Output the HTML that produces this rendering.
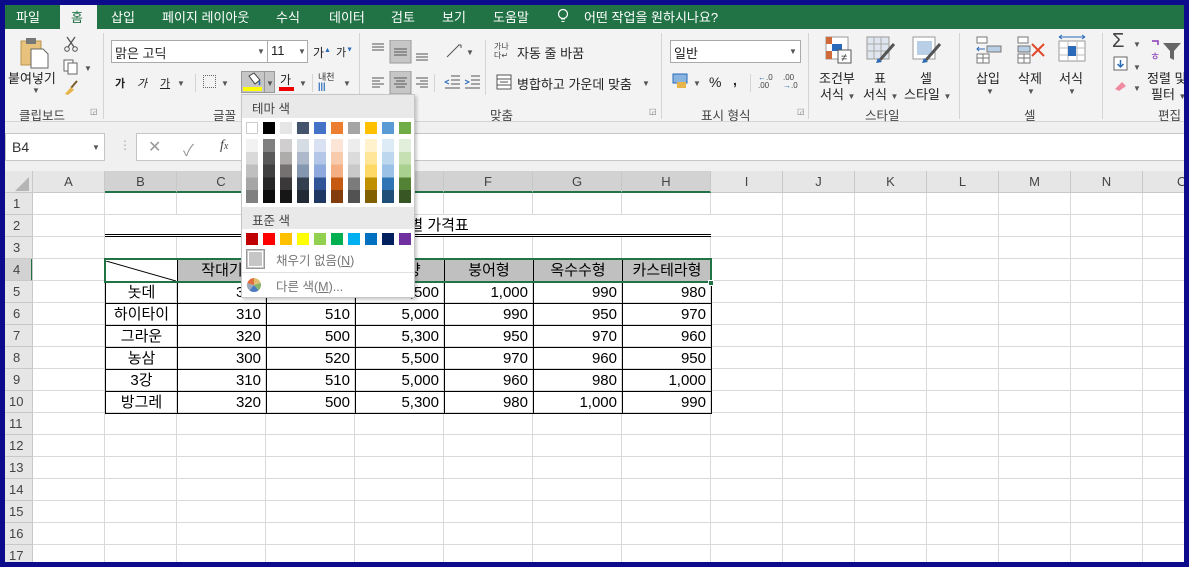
<!DOCTYPE html>
<html><head><meta charset="utf-8">
<style>
*{margin:0;padding:0;box-sizing:border-box}
body{width:1189px;height:567px;overflow:hidden;background:#0b0b8c;font-family:"Liberation Sans","Noto Sans CJK KR",sans-serif;position:relative}
.a{position:absolute;white-space:nowrap}
.t{color:#fff;font-size:13px;top:7px}
.r{font-size:13px;color:#222}
.lb{font-size:12.5px;color:#444;top:105px}
.sep{position:absolute;width:1px;background:#d4d4d4}
.dd{font-size:8px;color:#555}
.ch{position:absolute;top:171px;height:22px;font-size:13px;color:#444;text-align:center;line-height:22px;border-right:1px solid #c8c8c8}
.rh{position:absolute;left:5px;width:28px;height:22px;font-size:13px;color:#444;padding-left:8px;line-height:22px;border-bottom:1px solid #c8c8c8;background:#e6e6e6}
table.d{position:absolute;left:105px;top:259px;border-collapse:collapse;table-layout:fixed;font-size:15px;color:#000}
table.d td{border:1px solid #000;height:22px;padding:0 5px;text-align:right;line-height:20px;overflow:hidden}
table.d td.c{text-align:center}
table.d tr.h td{background:#c0c0c0;text-align:center}
.sw{position:absolute;width:12px;height:12px}
</style></head><body>
<div class="a" style="left:5px;top:5px;width:1180px;height:24px;background:#217346"></div>
<div class="a" style="left:60px;top:5px;width:37px;height:24px;background:#f3f3f3"></div>
<span class="a t" style="left:16px">파일</span>
<span class="a t" style="left:71px;color:#217346">홈</span>
<span class="a t" style="left:111px">삽입</span>
<span class="a t" style="left:162px">페이지 레이아웃</span>
<span class="a t" style="left:276px">수식</span>
<span class="a t" style="left:329px">데이터</span>
<span class="a t" style="left:391px">검토</span>
<span class="a t" style="left:442px">보기</span>
<span class="a t" style="left:493px">도움말</span>
<svg class="a" style="left:557px;top:8px" width="12" height="16"><circle cx="6" cy="6" r="4.5" fill="none" stroke="#fff" stroke-width="1.2"/><path d="M4 11h4M4.5 13.5h3" stroke="#fff"/></svg>
<span class="a t" style="left:584px">어떤 작업을 원하시나요?</span>
<div class="a" style="left:5px;top:29px;width:1180px;height:93px;background:#f3f3f3;border-bottom:1px solid #d5d5d5"></div>
<svg class="a" style="left:20px;top:37px" width="30" height="32"><rect x="1" y="4" width="20" height="24" fill="#e8c17c" stroke="#b89552"/><rect x="6" y="1" width="10" height="6" fill="#777"/><path d="M11 12h12l5 5v14H11z" fill="#fff" stroke="#666"/></svg>
<span class="a r" style="left:8px;top:68px">붙여넣기</span>
<span class="a dd" style="left:32px;top:86px">▼</span>
<svg class="a" style="left:63px;top:36px" width="16" height="16"><path d="M4 1l7 10M12 1L5 11" stroke="#555" stroke-width="1.3"/><circle cx="4" cy="13" r="2.3" fill="none" stroke="#555"/><circle cx="12" cy="13" r="2.3" fill="none" stroke="#555"/></svg>
<svg class="a" style="left:63px;top:59px" width="16" height="16"><rect x="1" y="1" width="9" height="11" fill="#fff" stroke="#666"/><rect x="5" y="4" width="9" height="11" fill="#fff" stroke="#666"/></svg>
<span class="a dd" style="left:84px;top:64px">▼</span>
<svg class="a" style="left:63px;top:80px" width="16" height="16"><path d="M14 1L8 8" stroke="#7a5a2a" stroke-width="2"/><path d="M2 14l6-7 3 3-6 5z" fill="#e5b54b"/></svg>
<span class="a lb" style="left:19px">클립보드</span>
<span class="a" style="left:90px;top:107px;font-size:8px;color:#777">◲</span>
<div class="sep" style="left:103px;top:33px;height:86px"></div>
<div class="a" style="left:111px;top:40px;width:157px;height:23px;background:#fff;border:1px solid #aaa"></div>
<span class="a r" style="left:115px;top:43px">맑은 고딕</span>
<span class="a dd" style="left:257px;top:47px">▼</span>
<div class="a" style="left:267px;top:40px;width:41px;height:23px;background:#fff;border:1px solid #aaa"></div>
<span class="a r" style="left:271px;top:43px">11</span>
<span class="a dd" style="left:298px;top:47px">▼</span>
<span class="a r" style="left:313px;top:44px;font-size:12px">가<sup style="font-size:7px;color:#2a6ab8">▲</sup></span>
<span class="a r" style="left:336px;top:44px;font-size:11px">가<sup style="font-size:7px;color:#2a6ab8">▼</sup></span>
<span class="a r" style="left:115px;top:75px;font-size:11px;font-weight:bold">가</span>
<span class="a r" style="left:137px;top:75px;font-size:11px;font-style:italic">가</span>
<span class="a r" style="left:160px;top:75px;font-size:11px;text-decoration:underline">가</span>
<span class="a dd" style="left:177px;top:79px">▼</span>
<div class="sep" style="left:195px;top:74px;height:18px"></div>
<div class="a" style="left:203px;top:75px;width:13px;height:13px;border:1px dotted #666"></div>
<span class="a dd" style="left:221px;top:79px">▼</span>
<div class="a" style="left:241px;top:71px;width:34px;height:22px;background:#c6c6c6;border:1px solid #999"></div>
<svg class="a" style="left:245px;top:72px" width="18" height="16"><path d="M4 4l5-3 6 7-5 4z" fill="#fff" stroke="#444"/><path d="M14 9c1 2 1 3 0 4" stroke="#2a6ab8" stroke-width="1.5" fill="none"/></svg>
<div class="a" style="left:243px;top:87px;width:19px;height:4px;background:#ffff00"></div>
<div class="a" style="left:264px;top:72px;width:1px;height:20px;background:#999"></div>
<span class="a dd" style="left:266px;top:79px">▼</span>
<span class="a r" style="left:280px;top:71px;font-size:12px">가</span>
<div class="a" style="left:279px;top:87px;width:15px;height:4px;background:#e00"></div>
<span class="a dd" style="left:299px;top:79px">▼</span>
<div class="sep" style="left:312px;top:74px;height:18px"></div>
<span class="a" style="left:318px;top:73px;font-size:9px;color:#333;line-height:9px">내천<br><b style="color:#2a6ab8">|||</b></span>
<span class="a dd" style="left:343px;top:79px">▼</span>
<span class="a lb" style="left:213px">글꼴</span>
<div class="sep" style="left:359px;top:33px;height:86px"></div>
<svg class="a" style="left:370px;top:40px" width="60" height="24"><path d="M2 4h12M2 7h12M2 10h12" stroke="#555"/><rect x="20" y="0" width="21" height="23" fill="#c6c6c6" stroke="#999"/><path d="M24 9h13M24 12h13M24 15h13" stroke="#555"/><path d="M46 14h12M46 17h12M46 20h12" stroke="#555"/></svg>
<svg class="a" style="left:444px;top:42px" width="20" height="18"><path d="M3 15l12-12" stroke="#555"/><path d="M14 3l3 0 0 3" stroke="#555" fill="none"/></svg>
<span class="a dd" style="left:466px;top:48px">▼</span>
<div class="sep" style="left:485px;top:40px;height:55px"></div>
<span class="a" style="left:494px;top:42px;font-size:8px;color:#444;line-height:9px">가나<br>다↵</span>
<span class="a r" style="left:517px;top:43px">자동 줄 바꿈</span>
<svg class="a" style="left:370px;top:71px" width="60" height="24"><path d="M2 7h12M2 10h8M2 13h12M2 16h8" stroke="#555"/><rect x="20" y="0" width="21" height="23" fill="#c6c6c6" stroke="#999"/><path d="M24 7h13M26 10h9M24 13h13M26 16h9" stroke="#555"/><path d="M46 7h12M50 10h8M46 13h12M50 16h8" stroke="#555"/></svg>
<div class="sep" style="left:434px;top:74px;height:18px"></div>
<svg class="a" style="left:444px;top:74px" width="40" height="16"><path d="M7 2h9M7 6h9M7 10h9M1 14h15" stroke="#555"/><path d="M5 6l-4 2 4 2" stroke="#2a6ab8" fill="none"/><path d="M27 2h9M27 6h9M27 10h9M21 14h15" stroke="#555"/><path d="M21 6l4 2-4 2" stroke="#2a6ab8" fill="none"/></svg>
<svg class="a" style="left:496px;top:74px" width="16" height="16"><rect x="1" y="1" width="14" height="14" fill="#fff" stroke="#555"/><path d="M1 5h14M1 11h14M4 8h8" stroke="#555"/></svg>
<span class="a r" style="left:517px;top:74px">병합하고 가운데 맞춤</span>
<span class="a dd" style="left:642px;top:79px">▼</span>
<span class="a lb" style="left:490px">맞춤</span>
<span class="a" style="left:649px;top:107px;font-size:8px;color:#777">◲</span>
<div class="sep" style="left:661px;top:33px;height:86px"></div>
<div class="a" style="left:670px;top:40px;width:131px;height:23px;background:#fff;border:1px solid #aaa"></div>
<span class="a r" style="left:674px;top:43px">일반</span>
<span class="a dd" style="left:789px;top:47px">▼</span>
<svg class="a" style="left:672px;top:73px" width="18" height="16"><rect x="1" y="1" width="14" height="9" fill="#8ab4e0" stroke="#2a6ab8"/><rect x="5" y="9" width="9" height="6" fill="#e5b54b"/></svg>
<span class="a dd" style="left:693px;top:79px">▼</span>
<span class="a r" style="left:709px;top:74px;font-size:14px">%</span>
<span class="a r" style="left:733px;top:72px;font-size:14px;font-weight:bold">,</span>
<div class="sep" style="left:750px;top:74px;height:18px"></div>
<span class="a" style="left:758px;top:74px;font-size:8px;color:#444;line-height:8px"><b style="color:#2a6ab8">←</b>.0<br>.00</span>
<span class="a" style="left:783px;top:74px;font-size:8px;color:#444;line-height:8px">.00<br><b style="color:#2a6ab8">→</b>.0</span>
<span class="a lb" style="left:701px">표시 형식</span>
<span class="a" style="left:797px;top:107px;font-size:8px;color:#777">◲</span>
<div class="sep" style="left:808px;top:33px;height:86px"></div>
<svg class="a" style="left:825px;top:36px" width="28" height="28"><rect x="1" y="1" width="22" height="22" fill="#fff" stroke="#999"/><rect x="1" y="1" width="6" height="7" fill="#d06a3a"/><rect x="7" y="8" width="10" height="7" fill="#2a6ab8"/><rect x="1" y="15" width="6" height="8" fill="#d06a3a"/><rect x="13" y="14" width="13" height="13" fill="#fff" stroke="#555"/><text x="16" y="25" font-size="11" fill="#333">≠</text></svg>
<span class="a r" style="left:819px;top:68px">조건부</span>
<span class="a r" style="left:820px;top:84px">서식 <span class="dd">▼</span></span>
<svg class="a" style="left:866px;top:36px" width="30" height="28"><rect x="1" y="1" width="22" height="22" fill="#dfe6ef" stroke="#999"/><path d="M1 8h22M1 15h22M8 1v22M15 1v22" stroke="#aaa"/><path d="M28 8L14 24" stroke="#555" stroke-width="3"/><path d="M12 22l4 4-6 1z" fill="#2a6ab8"/></svg>
<span class="a r" style="left:874px;top:68px">표</span>
<span class="a r" style="left:863px;top:84px">서식 <span class="dd">▼</span></span>
<svg class="a" style="left:912px;top:36px" width="30" height="28"><rect x="1" y="1" width="22" height="22" fill="#fff" stroke="#999"/><rect x="5" y="5" width="15" height="14" fill="#b9cfe6"/><path d="M28 8L14 24" stroke="#555" stroke-width="3"/><path d="M12 22l4 4-6 1z" fill="#2a6ab8"/></svg>
<span class="a r" style="left:920px;top:68px">셀</span>
<span class="a r" style="left:904px;top:84px">스타일 <span class="dd">▼</span></span>
<span class="a lb" style="left:865px">스타일</span>
<div class="sep" style="left:959px;top:33px;height:86px"></div>
<svg class="a" style="left:975px;top:36px" width="28" height="28"><rect x="2" y="1" width="10" height="6" fill="#fff" stroke="#777"/><rect x="12" y="10" width="14" height="6" fill="#b9cfe6" stroke="#777"/><path d="M2 13h8M4 11l-2 2 2 2" stroke="#2a6ab8" fill="none"/><rect x="2" y="18" width="12" height="9" fill="#fff" stroke="#777"/><path d="M2 22h12M8 18v9" stroke="#777"/></svg>
<span class="a r" style="left:976px;top:68px">삽입</span>
<span class="a dd" style="left:986px;top:87px">▼</span>
<svg class="a" style="left:1016px;top:36px" width="30" height="28"><rect x="2" y="1" width="10" height="6" fill="#fff" stroke="#777"/><rect x="2" y="10" width="12" height="6" fill="#b9cfe6" stroke="#777"/><rect x="2" y="18" width="12" height="9" fill="#fff" stroke="#777"/><path d="M2 22h12M8 18v9" stroke="#777"/><path d="M16 8l12 12M28 8L16 20" stroke="#e04a2a" stroke-width="2"/></svg>
<span class="a r" style="left:1018px;top:68px">삭제</span>
<span class="a dd" style="left:1027px;top:87px">▼</span>
<svg class="a" style="left:1057px;top:34px" width="30" height="30"><path d="M2 3h26M2 3l3-2M2 3l3 2M28 3l-3-2M28 3l-3 2" stroke="#2a6ab8" fill="none"/><rect x="2" y="7" width="26" height="20" fill="#fff" stroke="#999"/><path d="M2 14h26M2 21h26M11 7v20M20 7v20" stroke="#bbb"/><rect x="11" y="12" width="8" height="10" fill="#2a6ab8"/></svg>
<span class="a r" style="left:1059px;top:68px">서식</span>
<span class="a dd" style="left:1068px;top:87px">▼</span>
<span class="a lb" style="left:1024px">셀</span>
<div class="sep" style="left:1102px;top:33px;height:86px"></div>
<span class="a" style="left:1112px;top:30px;font-size:20px;color:#444">Σ</span>
<span class="a dd" style="left:1133px;top:40px">▼</span>
<svg class="a" style="left:1113px;top:56px" width="16" height="16"><rect x="1" y="1" width="13" height="13" fill="#fff" stroke="#666"/><path d="M7.5 4v7M4.5 8l3 3 3-3" stroke="#2a6ab8" stroke-width="1.5" fill="none"/></svg>
<span class="a dd" style="left:1133px;top:63px">▼</span>
<svg class="a" style="left:1113px;top:79px" width="16" height="14"><path d="M2 10l7-7 4 4-7 5z" fill="#f08aa0"/></svg>
<span class="a dd" style="left:1133px;top:84px">▼</span>
<svg class="a" style="left:1149px;top:38px" width="36" height="26"><path d="M3 3h6v4" stroke="#8a3ab8" fill="none" stroke-width="1.5"/><text x="1" y="22" font-size="11" fill="#8a3ab8" font-family="Noto Sans CJK KR">ㅎ</text><path d="M14 5h18l-7 8v9l-4-2v-7z" fill="#666"/></svg>
<span class="a r" style="left:1147px;top:68px">정렬 및</span>
<span class="a r" style="left:1151px;top:84px">필터 <span class="dd">▼</span></span>
<span class="a lb" style="left:1158px">편집</span>
<div class="a" style="left:5px;top:122px;width:1180px;height:49px;background:#f0f0f0"></div>
<div class="a" style="left:5px;top:133px;width:100px;height:28px;background:#fff;border:1px solid #c6c6c6"></div>
<span class="a" style="left:12px;top:139px;font-size:14px;color:#333">B4</span>
<span class="a dd" style="left:92px;top:143px">▼</span>
<span class="a" style="left:119px;top:138px;font-size:12px;color:#aaa">⋮</span>
<div class="a" style="left:136px;top:133px;width:1049px;height:28px;background:#fff;border:1px solid #c6c6c6"></div>
<span class="a" style="left:148px;top:137px;font-size:16px;color:#999">✕</span>
<span class="a" style="left:183px;top:137px;font-size:16px;color:#999">✓</span>
<span class="a" style="left:220px;top:138px;font-size:14px;color:#444;font-style:italic;font-family:'Liberation Serif',serif">f<span style="font-size:10px">x</span></span>
<div class="a" style="left:242px;top:135px;width:1px;height:24px;background:#ddd"></div>
<div class="a" style="left:33px;top:193px;width:1152px;height:369px;background-color:#fff;background-image:repeating-linear-gradient(to bottom,transparent 0 21px,#d9d9d9 21px 22px)"></div>
<div class="a" style="left:33px;top:193px;width:1152px;height:369px;background-image:linear-gradient(#d9d9d9,#d9d9d9),linear-gradient(#d9d9d9,#d9d9d9),linear-gradient(#d9d9d9,#d9d9d9),linear-gradient(#d9d9d9,#d9d9d9),linear-gradient(#d9d9d9,#d9d9d9),linear-gradient(#d9d9d9,#d9d9d9),linear-gradient(#d9d9d9,#d9d9d9),linear-gradient(#d9d9d9,#d9d9d9),linear-gradient(#d9d9d9,#d9d9d9),linear-gradient(#d9d9d9,#d9d9d9),linear-gradient(#d9d9d9,#d9d9d9),linear-gradient(#d9d9d9,#d9d9d9),linear-gradient(#d9d9d9,#d9d9d9),linear-gradient(#d9d9d9,#d9d9d9);background-repeat:no-repeat;background-size:1px 100%;background-position:71px 0,143px 0,232px 0,321px 0,410px 0,499px 0,588px 0,677px 0,749px 0,821px 0,893px 0,965px 0,1037px 0,1109px 0"></div>
<div class="a" style="left:5px;top:171px;width:1180px;height:22px;background:#e6e6e6;border-bottom:1px solid #c8c8c8"></div>
<svg class="a" style="left:14px;top:176px" width="16" height="16"><path d="M15 1v14H1z" fill="#b5b5b5"/></svg>
<div class="ch" style="left:5px;width:28px"></div>
<div class="ch" style="left:33px;width:72px">A</div>
<div class="ch" style="left:105px;width:72px;background:#d2d2d2;border-bottom:2px solid #217346">B</div>
<div class="ch" style="left:177px;width:89px;background:#d2d2d2;border-bottom:2px solid #217346">C</div>
<div class="ch" style="left:266px;width:89px;background:#d2d2d2;border-bottom:2px solid #217346">D</div>
<div class="ch" style="left:355px;width:89px;background:#d2d2d2;border-bottom:2px solid #217346">E</div>
<div class="ch" style="left:444px;width:89px;background:#d2d2d2;border-bottom:2px solid #217346">F</div>
<div class="ch" style="left:533px;width:89px;background:#d2d2d2;border-bottom:2px solid #217346">G</div>
<div class="ch" style="left:622px;width:89px;background:#d2d2d2;border-bottom:2px solid #217346">H</div>
<div class="ch" style="left:711px;width:72px">I</div>
<div class="ch" style="left:783px;width:72px">J</div>
<div class="ch" style="left:855px;width:72px">K</div>
<div class="ch" style="left:927px;width:72px">L</div>
<div class="ch" style="left:999px;width:72px">M</div>
<div class="ch" style="left:1071px;width:72px">N</div>
<div class="ch" style="left:1143px;width:50px;text-align:left;padding-left:34px">O</div>
<div class="rh" style="top:193px">1</div><div class="rh" style="top:215px">2</div><div class="rh" style="top:237px">3</div>
<div class="rh" style="top:259px;background:#d2d2d2;border-right:2px solid #217346">4</div>
<div class="rh" style="top:281px">5</div><div class="rh" style="top:303px">6</div><div class="rh" style="top:325px">7</div><div class="rh" style="top:347px">8</div><div class="rh" style="top:369px">9</div>
<div class="rh" style="top:391px;padding-left:4px">10</div><div class="rh" style="top:413px;padding-left:4px">11</div><div class="rh" style="top:435px;padding-left:4px">12</div><div class="rh" style="top:457px;padding-left:4px">13</div><div class="rh" style="top:479px;padding-left:4px">14</div><div class="rh" style="top:501px;padding-left:4px">15</div><div class="rh" style="top:523px;padding-left:4px">16</div><div class="rh" style="top:545px;padding-left:4px">17</div>
<div class="a" style="left:32px;top:193px;width:1px;height:369px;background:#c8c8c8"></div>
<div class="a" style="left:105px;top:215px;width:606px;height:22px;background:#fff;border-bottom:3px double #000"></div>
<span class="a" style="left:350px;top:215px;font-size:15px;line-height:21px;color:#000">붕어빵 틀별 가격표</span>
<table class="d">
<colgroup><col style="width:72px"><col style="width:89px"><col style="width:89px"><col style="width:89px"><col style="width:89px"><col style="width:89px"><col style="width:89px"></colgroup>
<tr class="h"><td style="background:#fff;padding:0"><svg width="70" height="20" style="display:block"><path d="M0 0L70 20" stroke="#000"/></svg></td><td>작대기</td><td>원형</td><td>별모양</td><td>붕어형</td><td>옥수수형</td><td>카스테라형</td></tr>
<tr><td class="c">놋데</td><td>300</td><td>520</td><td>5,500</td><td>1,000</td><td>990</td><td>980</td></tr>
<tr><td class="c">하이타이</td><td>310</td><td>510</td><td>5,000</td><td>990</td><td>950</td><td>970</td></tr>
<tr><td class="c">그라운</td><td>320</td><td>500</td><td>5,300</td><td>950</td><td>970</td><td>960</td></tr>
<tr><td class="c">농삼</td><td>300</td><td>520</td><td>5,500</td><td>970</td><td>960</td><td>950</td></tr>
<tr><td class="c">3강</td><td>310</td><td>510</td><td>5,000</td><td>960</td><td>980</td><td>1,000</td></tr>
<tr><td class="c">방그레</td><td>320</td><td>500</td><td>5,300</td><td>980</td><td>1,000</td><td>990</td></tr>
</table>
<div class="a" style="left:104px;top:258px;width:608px;height:25px;border:2px solid #217346"></div>
<div class="a" style="left:708px;top:280px;width:6px;height:6px;background:#217346;border:1px solid #fff"></div>
<div class="a" style="left:241px;top:94px;width:174px;height:204px;background:#fff;border:1px solid #c6c6c6;box-shadow:2px 2px 3px rgba(0,0,0,.2)"></div>
<div class="a" style="left:242px;top:95px;width:172px;height:23px;background:#e9e9e9"></div>
<span class="a" style="left:252px;top:98px;font-size:12.5px;color:#444">테마 색</span>
<div class="a" style="left:242px;top:207px;width:172px;height:22px;background:#e9e9e9"></div>
<span class="a" style="left:252px;top:210px;font-size:12.5px;color:#444">표준 색</span>
<div class="sw" style="left:246px;top:122px;background:#fff;border:1px solid #ccc"></div>
<div class="sw" style="left:263px;top:122px;background:#000"></div>
<div class="sw" style="left:280px;top:122px;background:#e7e6e6"></div>
<div class="sw" style="left:297px;top:122px;background:#44546a"></div>
<div class="sw" style="left:314px;top:122px;background:#4472c4"></div>
<div class="sw" style="left:331px;top:122px;background:#ed7d31"></div>
<div class="sw" style="left:348px;top:122px;background:#a5a5a5"></div>
<div class="sw" style="left:365px;top:122px;background:#ffc000"></div>
<div class="sw" style="left:382px;top:122px;background:#5b9bd5"></div>
<div class="sw" style="left:399px;top:122px;background:#70ad47"></div>
<div class="a" style="left:246px;top:139px;width:12px;height:64px;background:linear-gradient(#f2f2f2 0 20%,#d9d9d9 20% 40%,#bfbfbf 40% 60%,#a6a6a6 60% 80%,#808080 80%)"></div>
<div class="a" style="left:263px;top:139px;width:12px;height:64px;background:linear-gradient(#808080 0 20%,#595959 20% 40%,#404040 40% 60%,#262626 60% 80%,#0d0d0d 80%)"></div>
<div class="a" style="left:280px;top:139px;width:12px;height:64px;background:linear-gradient(#d0cece 0 20%,#aeabab 20% 40%,#757171 40% 60%,#3a3838 60% 80%,#161616 80%)"></div>
<div class="a" style="left:297px;top:139px;width:12px;height:64px;background:linear-gradient(#d6dce4 0 20%,#adb9ca 20% 40%,#8496b0 40% 60%,#333f4f 60% 80%,#222a35 80%)"></div>
<div class="a" style="left:314px;top:139px;width:12px;height:64px;background:linear-gradient(#d9e1f2 0 20%,#b4c6e7 20% 40%,#8ea9db 40% 60%,#305496 60% 80%,#203764 80%)"></div>
<div class="a" style="left:331px;top:139px;width:12px;height:64px;background:linear-gradient(#fce4d6 0 20%,#f8cbad 20% 40%,#f4b084 40% 60%,#c65911 60% 80%,#833c0c 80%)"></div>
<div class="a" style="left:348px;top:139px;width:12px;height:64px;background:linear-gradient(#ededed 0 20%,#dbdbdb 20% 40%,#c9c9c9 40% 60%,#7b7b7b 60% 80%,#525252 80%)"></div>
<div class="a" style="left:365px;top:139px;width:12px;height:64px;background:linear-gradient(#fff2cc 0 20%,#ffe699 20% 40%,#ffd966 40% 60%,#bf8f00 60% 80%,#806000 80%)"></div>
<div class="a" style="left:382px;top:139px;width:12px;height:64px;background:linear-gradient(#ddebf7 0 20%,#bdd7ee 20% 40%,#9bc2e6 40% 60%,#2f75b5 60% 80%,#1f4e78 80%)"></div>
<div class="a" style="left:399px;top:139px;width:12px;height:64px;background:linear-gradient(#e2efda 0 20%,#c6e0b4 20% 40%,#a9d08e 40% 60%,#548235 60% 80%,#375623 80%)"></div>
<div class="sw" style="left:246px;top:233px;background:#c00000"></div>
<div class="sw" style="left:263px;top:233px;background:#ff0000"></div>
<div class="sw" style="left:280px;top:233px;background:#ffc000"></div>
<div class="sw" style="left:297px;top:233px;background:#ffff00"></div>
<div class="sw" style="left:314px;top:233px;background:#92d050"></div>
<div class="sw" style="left:331px;top:233px;background:#00b050"></div>
<div class="sw" style="left:348px;top:233px;background:#00b0f0"></div>
<div class="sw" style="left:365px;top:233px;background:#0070c0"></div>
<div class="sw" style="left:382px;top:233px;background:#002060"></div>
<div class="sw" style="left:399px;top:233px;background:#7030a0"></div>
<div class="a" style="left:246px;top:249px;width:19px;height:20px;background:#c6c6c6;border:1px solid #999;outline:1px solid #fff;outline-offset:-3px"></div>
<span class="a" style="left:276px;top:250px;font-size:12.5px;color:#777">채우기 없음(<u>N</u>)</span>
<div class="a" style="left:242px;top:272px;width:172px;height:1px;background:#e0e0e0"></div>
<svg class="a" style="left:246px;top:277px" width="16" height="16"><path d="M8 8L8 1A7 7 0 0 1 14.6 5.7z" fill="#e0c070"/><path d="M8 8L14.6 5.7A7 7 0 0 1 12.5 13.4z" fill="#8ab46a"/><path d="M8 8L12.5 13.4A7 7 0 0 1 3.5 13.4z" fill="#4a7ac0"/><path d="M8 8L3.5 13.4A7 7 0 0 1 1.2 6.2z" fill="#9aa8b8"/><path d="M8 8L1.2 6.2A7 7 0 0 1 8 1z" fill="#e07040"/></svg>
<span class="a" style="left:276px;top:276px;font-size:12.5px;color:#777">다른 색(<u>M</u>)...</span>
<div class="a" style="left:0;top:0;width:1189px;height:567px;border:5px solid #0b0b8c"></div>
</body></html>
